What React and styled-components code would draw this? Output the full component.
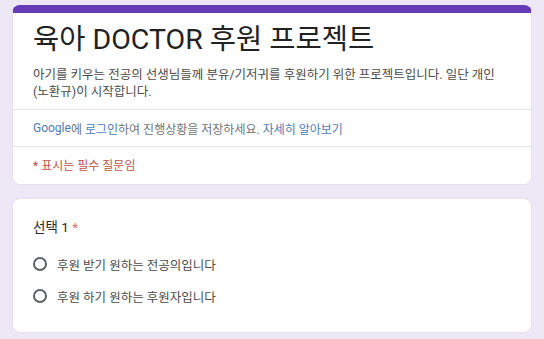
import styled, { createGlobalStyle } from 'styled-components'

const GlobalStyle = createGlobalStyle`
	body {
		margin: 0;
		background: #ede7f6;
		font-family: Roboto, 'Noto Sans CJK KR', sans-serif;
	}
`

const options = ['후원 받기 원하는 전공의입니다', '후원 하기 원하는 후원자입니다']

export default function App() {
	return (
		<Page>
			<GlobalStyle />

			{/* Header card */}
			<Card $accent>
				<Intro>
					<Title>육아 DOCTOR 후원 프로젝트</Title>
					<Description>
						아기를 키우는 전공의 선생님들께 분유/기저귀를 후원하기 위한 프로젝트입니다. 일단 개인
						(노환규)이 시작합니다.
					</Description>
				</Intro>

				<InfoRow>
					<Link>Google</Link>에 <Link>로그인</Link>하여 진행상황을 저장하세요.{' '}
					<Link>자세히 알아보기</Link>
				</InfoRow>

				<RequiredRow>* 표시는 필수 질문임</RequiredRow>
			</Card>

			{/* Question card */}
			<Card>
				<Question>
					<QuestionTitle>
						선택 1 <Star>*</Star>
					</QuestionTitle>

					<OptionList>
						{options.map((label) => (
							<Option key={label}>
								<Radio />
								<span>{label}</span>
							</Option>
						))}
					</OptionList>
				</Question>
			</Card>
		</Page>
	)
}

// Styled components
const Page = styled.div`
	display: flex;
	flex-direction: column;
	gap: 13px;
	padding: 5px 12px 0;
	width: 520px;
`

const Card = styled.section`
	background: #fff;
	border-radius: 8px;
	border: 1px solid #e4e0ec;
	border-top: ${({ $accent }) => ($accent ? '8px solid #673ab7' : '1px solid #e4e0ec')};
	overflow: hidden;
`

const Intro = styled.div`
	padding: 10px 20px 9px;
	border-bottom: 1px solid #e6e6e6;
`

const Title = styled.h1`
	margin: 0;
	font-size: 28.5px;
	font-weight: 400;
	line-height: 34px;
	color: #222;
`

const Description = styled.p`
	margin: 9px 0 0;
	font-size: 12.5px;
	line-height: 17px;
	color: #4a4a4a;
`

const InfoRow = styled.div`
	padding: 0 20px;
	height: 36px;
	display: flex;
	align-items: center;
	white-space: pre;
	font-size: 12px;
	color: #6f7378;
	border-bottom: 1px solid #e6e6e6;
`

const Link = styled.span`
	color: #4a7cb8;
`

const RequiredRow = styled.div`
	padding: 0 20px 3px;
	height: 34px;
	display: flex;
	align-items: center;
	font-size: 12px;
	color: #c0544a;
`

const Question = styled.div`
	padding: 18px 20px 26px;
`

const QuestionTitle = styled.div`
	font-size: 13.5px;
	line-height: 20px;
	color: #2b2b2b;
`

const Star = styled.span`
	color: #d0706a;
`

const OptionList = styled.div`
	display: flex;
	flex-direction: column;
	gap: 12px;
	margin-top: 17px;
`

const Option = styled.label`
	display: flex;
	align-items: center;
	gap: 10px;
	height: 20px;
	font-size: 12.5px;
	color: #4a4a4a;
`

const Radio = styled.span`
	box-sizing: border-box;
	width: 14px;
	height: 14px;
	border: 2px solid #5f6368;
	border-radius: 50%;
	flex-shrink: 0;
`
